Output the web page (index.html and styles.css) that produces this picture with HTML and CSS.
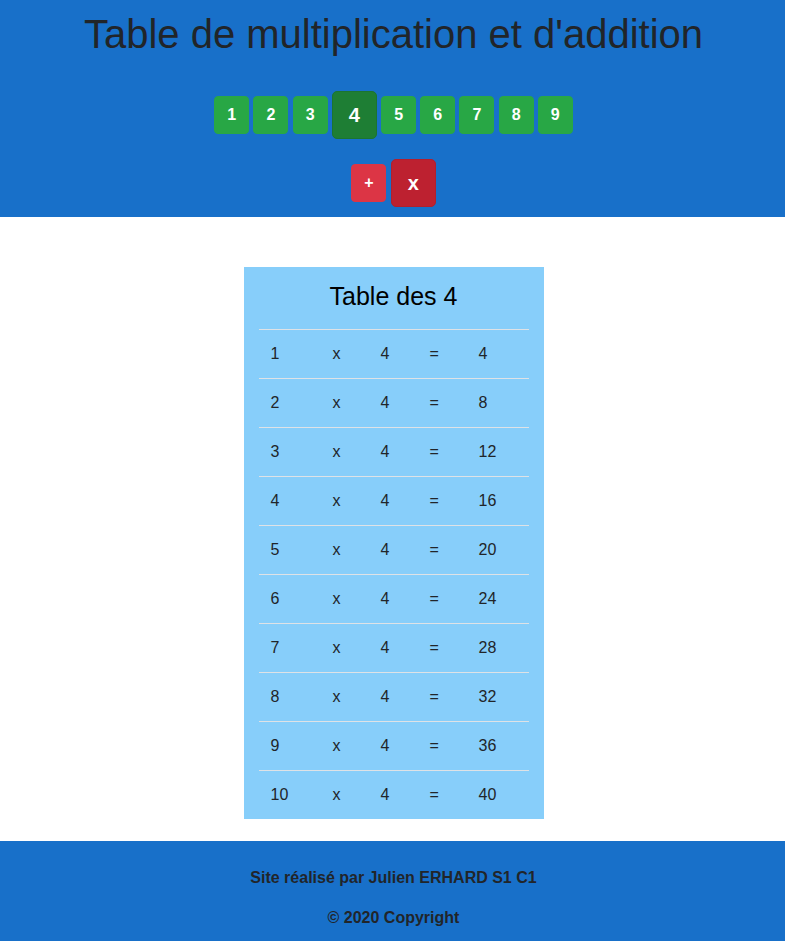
FILE: index.html
```html
<!DOCTYPE html>
<html lang="fr">
<head>
<meta charset="utf-8">
<title>Table de multiplication et d'addition</title>
<link rel="stylesheet" href="styles.css">
</head>
<body>
<header class="header">
  <h1 class="title">Table de multiplication et d'addition</h1>
  <nav class="btn-row">
    <a class="btn btn-green">1</a>
    <a class="btn btn-green">2</a>
    <a class="btn btn-green">3</a>
    <a class="btn btn-green-dark btn-lg">4</a>
    <a class="btn btn-green">5</a>
    <a class="btn btn-green">6</a>
    <a class="btn btn-green">7</a>
    <a class="btn btn-green">8</a>
    <a class="btn btn-green">9</a>
  </nav>
  <nav class="btn-row btn-row-ops">
    <a class="btn btn-red">+</a>
    <a class="btn btn-red-dark btn-lg">x</a>
  </nav>
</header>
<main class="main">
  <section class="card">
    <h2 class="card-title">Table des 4</h2>
    <table class="mult">
      <colgroup>
        <col class="c1"><col class="c2"><col class="c3"><col class="c4"><col class="c5">
      </colgroup>
      <tbody>
        <tr><td>1</td><td>x</td><td>4</td><td>=</td><td>4</td></tr>
        <tr><td>2</td><td>x</td><td>4</td><td>=</td><td>8</td></tr>
        <tr><td>3</td><td>x</td><td>4</td><td>=</td><td>12</td></tr>
        <tr><td>4</td><td>x</td><td>4</td><td>=</td><td>16</td></tr>
        <tr><td>5</td><td>x</td><td>4</td><td>=</td><td>20</td></tr>
        <tr><td>6</td><td>x</td><td>4</td><td>=</td><td>24</td></tr>
        <tr><td>7</td><td>x</td><td>4</td><td>=</td><td>28</td></tr>
        <tr><td>8</td><td>x</td><td>4</td><td>=</td><td>32</td></tr>
        <tr><td>9</td><td>x</td><td>4</td><td>=</td><td>36</td></tr>
        <tr><td>10</td><td>x</td><td>4</td><td>=</td><td>40</td></tr>
      </tbody>
    </table>
  </section>
</main>
<footer class="footer">
  <p class="foot-line">Site réalisé par Julien ERHARD S1 C1</p>
  <p class="foot-line">© 2020 Copyright</p>
</footer>
</body>
</html>
```

FILE: styles.css
```css
* { box-sizing: border-box; }
html, body {
  margin: 0;
  padding: 0;
  background: #fff;
  font-family: "Liberation Sans", Arial, sans-serif;
  font-size: 16px;
  line-height: 1.5;
  color: #212529;
}
.header {
  background: #1870c9;
  padding: 10px 0 10px 2px;
  text-align: center;
}
.title {
  margin: 0;
  font-size: 40px;
  font-weight: 400;
  line-height: 48px;
  color: #212529;
}
.btn-row {
  display: flex;
  justify-content: center;
  align-items: center;
  gap: 4.25px;
  margin-top: 33px;
}
.btn-row-ops {
  margin-top: 20px;
}
.btn {
  display: inline-block;
  padding: 6px 12px;
  font-size: 16px;
  line-height: 24px;
  font-weight: 700;
  color: #fff;
  border: 1px solid transparent;
  border-radius: 4px;
  text-decoration: none;
}
.btn-lg {
  padding: 8px 16px;
  font-size: 20px;
  line-height: 30px;
  border-radius: 5px;
}
.btn-green { background: #28a745; border-color: #28a745; }
.btn-green-dark { background: #1e7e34; border-color: #1c7430; }
.btn-red { background: #dc3545; border-color: #dc3545; }
.btn-red-dark { background: #bd2130; border-color: #b21f2d; }
.main {
  padding: 50px 0 22px 2px;
  display: flex;
  justify-content: center;
}
.card {
  width: 300px;
  background: #87cefa;
  padding: 15px 15px 0;
}
.card-title {
  margin: 0 0 18px;
  font-size: 25px;
  font-weight: 400;
  line-height: 29px;
  text-align: center;
  color: #000;
}
.mult {
  width: 270px;
  border-collapse: collapse;
  table-layout: fixed;
}
.c1 { width: 62px; }
.c2 { width: 48px; }
.c3 { width: 49px; }
.c4 { width: 49px; }
.c5 { width: 62px; }
.mult td {
  padding: 12px 12px;
  border-top: 1px solid #dee2e6;
  line-height: 24px;
  color: #212529;
  text-align: left;
}
.footer {
  background: #1870c9;
  padding: 25px 0 1px 2px;
  text-align: center;
}
.foot-line {
  margin: 0 0 16px;
  font-weight: 700;
  color: #212529;
}
```
